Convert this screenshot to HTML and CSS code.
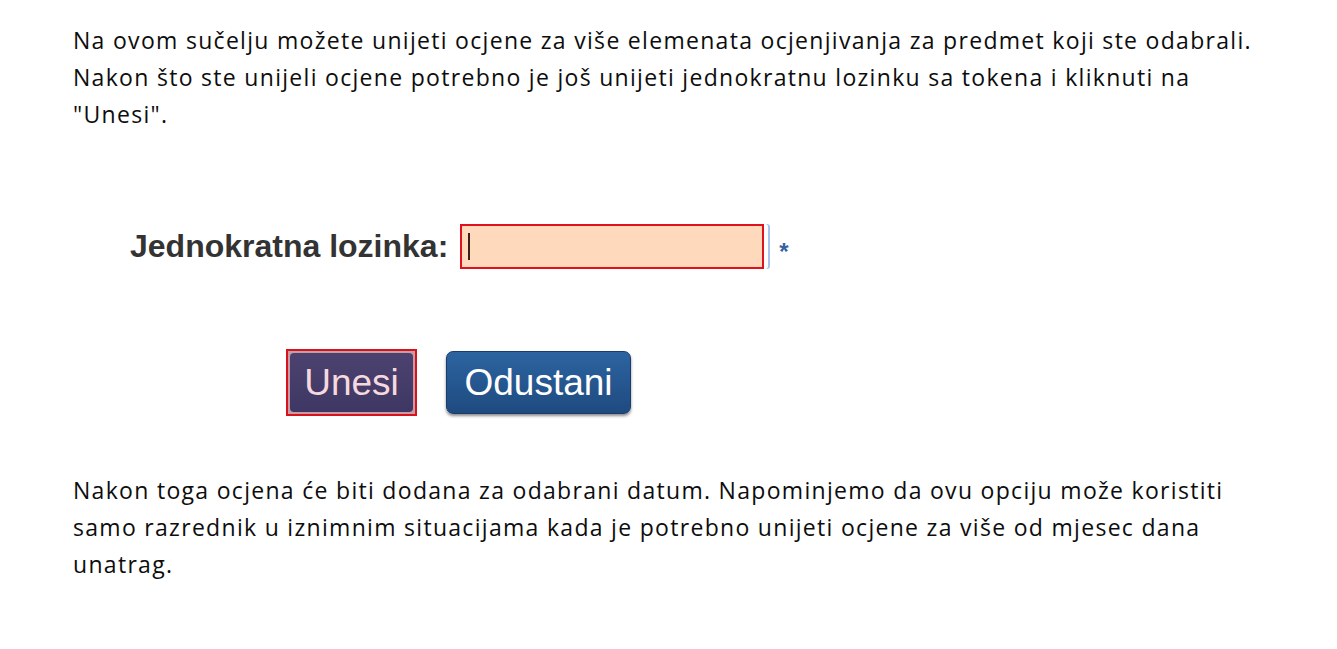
FILE: index.html
```html
<!DOCTYPE html>
<html lang="hr">
<head>
    <meta charset="UTF-8">
    <title>Unos ocjena</title>
    <link rel="stylesheet" href="styles.css">
</head>
<body>
    <div class="page">
        <p class="text">Na ovom sučelju možete unijeti ocjene za više elemenata ocjenjivanja za predmet koji ste odabrali. Nakon što ste unijeli ocjene potrebno je još unijeti jednokratnu lozinku sa tokena i kliknuti na "Unesi".</p>

        <div class="otp-row">
            <label for="otp" class="otp-label">Jednokratna lozinka:</label>
            <div class="otp-field">
                <input type="text" id="otp" class="otp-input">
                <span class="caret"></span>
            </div>
            <span class="required">*</span>
        </div>

        <div class="buttons">
            <div class="btn-wrap">
                <button class="btn btn-submit">Unesi</button>
            </div>
            <button class="btn btn-cancel">Odustani</button>
        </div>

        <p class="text">Nakon toga ocjena će biti dodana za odabrani datum. Napominjemo da ovu opciju može koristiti samo razrednik u iznimnim situacijama kada je potrebno unijeti ocjene za više od mjesec dana unatrag.</p>
    </div>
</body>
</html>
```

FILE: styles.css
```css
body {
    margin: 0;
    background-color: #fff;
    color: #0d0d0d;
}

.page {
    padding: 22px 0 0 73px;
    width: 1187px;
}

.text {
    font-family: 'Open Sans', sans-serif;
    font-size: 23px;
    letter-spacing: 1.3px;
    line-height: 37px;
    margin: 0;
}

.otp-row {
    display: flex;
    align-items: center;
    margin: 91px 0 0 57px;
}

.otp-label {
    font-family: 'Liberation Sans', Arial, sans-serif;
    font-weight: bold;
    font-size: 32px;
    color: #333;
    margin-right: 12px;
}

.otp-field {
    position: relative;
    padding-right: 4px;
    border-radius: 3px;
    box-shadow: 2px 0 0 #a9c3ef;
}

.otp-input {
    display: block;
    width: 300px;
    height: 41px;
    box-sizing: content-box;
    padding: 0;
    margin: 0;
    border: 2px solid #e0101c;
    background-color: #fed9bc;
    outline: none;
}

.caret {
    position: absolute;
    left: 8px;
    top: 9px;
    width: 2px;
    height: 27px;
    background-color: #3a1f1a;
}

.required {
    color: #3563a0;
    font-family: 'Liberation Sans', Arial, sans-serif;
    font-weight: bold;
    font-size: 24px;
    margin-left: 11px;
    margin-top: 10px;
}

.buttons {
    display: flex;
    align-items: center;
    gap: 29px;
    margin: 80px 0 0 213px;
}

.btn-wrap {
    border: 2px solid #d8121c;
    padding: 2px;
    background-color: #c99ba4;
}

.btn {
    font-family: 'Liberation Sans', Arial, sans-serif;
    font-size: 37px;
    border: none;
    padding: 0;
    cursor: pointer;
    display: block;
}

.btn-submit {
    width: 123px;
    height: 59px;
    background: linear-gradient(#4b4270, #3f3763);
    color: #f6d9df;
    border-radius: 4px;
}

.btn-cancel {
    box-sizing: border-box;
    width: 185px;
    height: 63px;
    background: linear-gradient(#2c64a0, #1f4a80);
    color: #fff;
    border: 1px solid #1b3d6b;
    border-radius: 7px;
    box-shadow: 0 2px 3px rgba(0, 0, 0, 0.45);
}

.buttons + .text {
    margin-top: 56px;
}
```
